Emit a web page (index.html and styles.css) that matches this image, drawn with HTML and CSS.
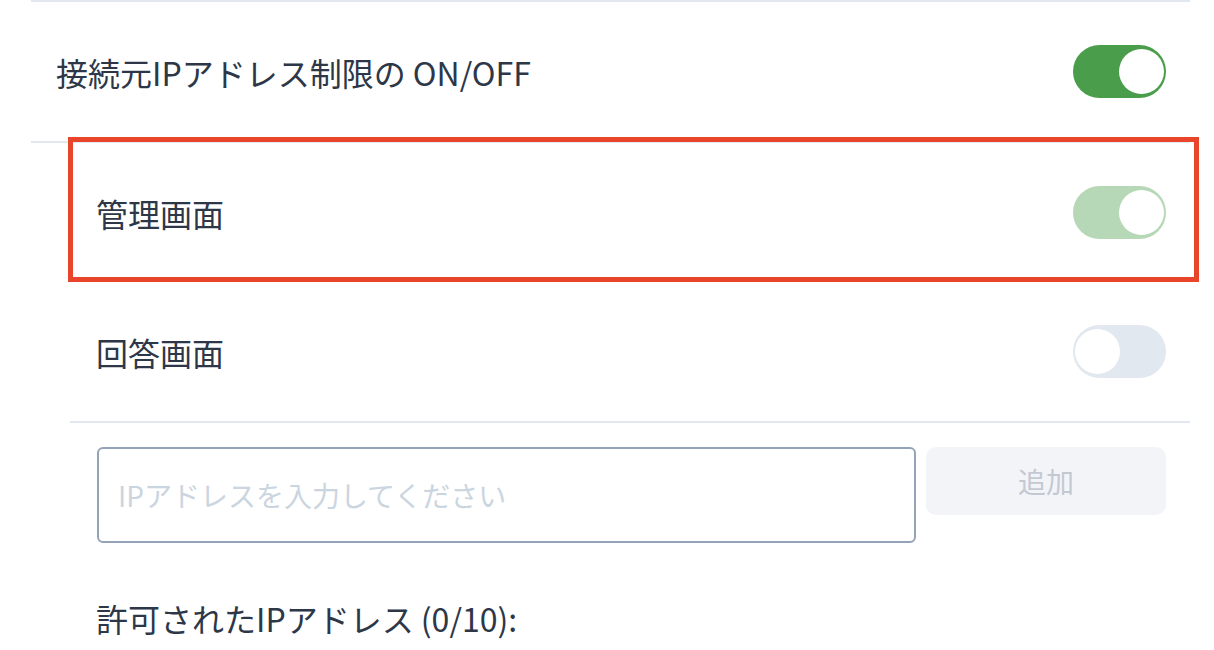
FILE: index.html
```html
<!DOCTYPE html>
<html lang="ja">
<head>
<meta charset="utf-8">
<title>IPアドレス制限</title>
<link rel="stylesheet" href="styles.css">
</head>
<body>
  <section class="panel">
    <div class="row row-main">
      <span class="label">接続元IPアドレス制限の ON/OFF</span>
      <span class="switch is-on"><span class="knob"></span></span>
    </div>
    <div class="sub">
      <div class="row row-sub is-marked">
        <span class="label">管理画面</span>
        <span class="switch is-on is-disabled"><span class="knob"></span></span>
      </div>
      <div class="row row-sub">
        <span class="label">回答画面</span>
        <span class="switch"><span class="knob"></span></span>
      </div>
      <div class="add-row">
        <input class="ip-input" type="text" placeholder="IPアドレスを入力してください">
        <button class="add-btn" type="button" disabled>追加</button>
      </div>
      <div class="allowed">許可されたIPアドレス (0/10):</div>
    </div>
  </section>
</body>
</html>
```

FILE: styles.css
```css
html, body {
  margin: 0;
  padding: 0;
  background: #ffffff;
}

body {
  font-family: "Noto Sans CJK JP", "Noto Sans", sans-serif;
  color: #2d3748;
  overflow: hidden;
}

.panel {
  margin-left: 31px;
  width: 1159px;
  border-top: 2px solid #e2e8f0;
}

.row {
  display: flex;
  align-items: center;
  justify-content: space-between;
  height: 139px;
  box-sizing: border-box;
}

.label {
  font-size: 32px;
  line-height: 1.5;
}

.row-main {
  height: 141px;
  padding: 0 24px 0 25px;
  border-bottom: 2px solid #e2e8f0;
}

.sub {
  margin-left: 39px;
}

.row-sub {
  padding: 0 24px 0 26px;
}

/* highlight frame drawn over the row */
.is-marked {
  position: relative;
}

.is-marked::after {
  content: "";
  position: absolute;
  top: -6px;
  left: -2px;
  right: -9px;
  bottom: 0;
  border: 5px solid #e9452a;
  pointer-events: none;
}

/* toggle switch */
.switch {
  position: relative;
  display: block;
  width: 93px;
  height: 53px;
  border-radius: 27px;
  background: #e2e8f0;
  flex: none;
}

.switch .knob {
  position: absolute;
  top: 4px;
  left: 2px;
  width: 45px;
  height: 45px;
  border-radius: 50%;
  background: #ffffff;
}

.switch.is-on {
  background: #4a9d4a;
}

.switch.is-on .knob {
  left: auto;
  right: 2px;
}

.switch.is-on.is-disabled {
  background: #b6d8b6;
}

/* add address form */
.add-row {
  display: flex;
  align-items: flex-start;
  gap: 10px;
  padding: 24px 24px 0 27px;
  border-top: 2px solid #e2e8f0;
}

.ip-input {
  width: 819px;
  height: 96px;
  box-sizing: border-box;
  border: 2px solid #94a3b8;
  border-radius: 6px;
  padding: 0 19px;
  font-family: inherit;
  font-size: 28px;
  color: #2d3748;
  background: #ffffff;
  outline: none;
}

.ip-input::placeholder {
  color: #cbd5e0;
}

.add-btn {
  width: 240px;
  height: 68px;
  border: none;
  border-radius: 10px;
  background: #f3f4f8;
  color: #c3c9d3;
  font-family: inherit;
  font-size: 28px;
  padding: 0;
}

.allowed {
  margin-top: 51px;
  padding-left: 26px;
  font-size: 32px;
  line-height: 1.5;
}
```
